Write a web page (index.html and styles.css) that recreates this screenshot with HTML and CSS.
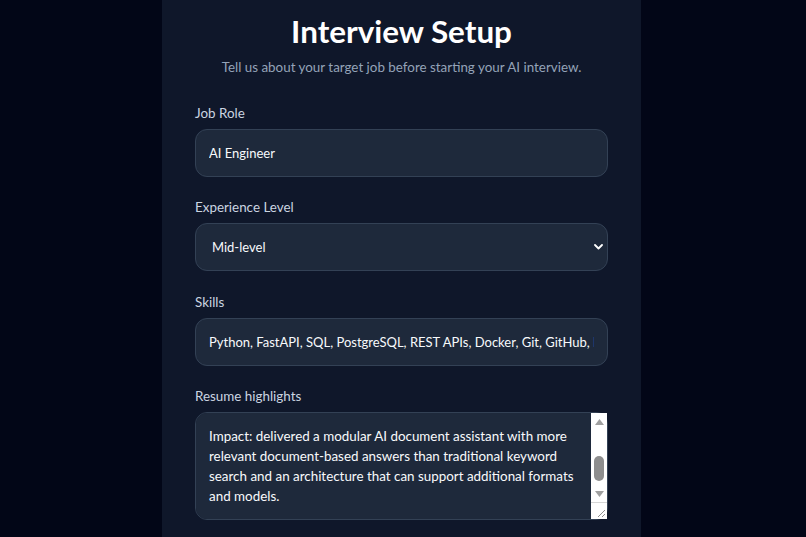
FILE: index.html
```html
<!DOCTYPE html>
<html lang="en">
<head>
<meta charset="utf-8">
<title>Interview Setup</title>
<link rel="stylesheet" href="styles.css">
</head>
<body>
<main class="setup">
  <h1 class="title">Interview Setup</h1>
  <p class="subtitle">Tell us about your target job before starting your AI interview.</p>
  <form class="form">
    <div class="field">
      <label class="label" for="role">Job Role</label>
      <input class="control" id="role" type="text" value="AI Engineer">
    </div>
    <div class="field">
      <label class="label" for="level">Experience Level</label>
      <div class="select-wrap">
        <select class="control select" id="level">
          <option>Entry-level</option>
          <option selected>Mid-level</option>
          <option>Senior</option>
        </select>
        <svg class="chevron" width="9" height="6" viewBox="0 0 9 6" aria-hidden="true"><polyline points="1,1 4.5,4.5 8,1" fill="none" stroke="#ffffff" stroke-width="1.8" stroke-linecap="round" stroke-linejoin="round"/></svg>
      </div>
    </div>
    <div class="field">
      <label class="label" for="skills">Skills</label>
      <input class="control" id="skills" type="text" value="Python, FastAPI, SQL, PostgreSQL, REST APIs, Docker, Git, GitHub, LangChain, OpenAI API">
    </div>
    <div class="field">
      <label class="label" for="resume">Resume highlights</label>
      <div class="textarea-wrap">
        <textarea class="control textarea" id="resume">Project: AI Document Assistant
Built a retrieval-augmented question answering assistant in Python and FastAPI that lets users upload PDFs and ask questions about them.
Implemented chunking, embeddings and vector search with PostgreSQL and exposed REST APIs for ingestion and chat.

Impact: delivered a modular AI document assistant with more relevant document-based answers than traditional keyword search and an architecture that can support additional formats and models.</textarea>
        <div class="scrollbar" aria-hidden="true">
          <div class="sb-button"><svg width="9" height="6" viewBox="0 0 9 6"><polygon points="0,6 4.5,0 9,6" fill="#a0a0a0"/></svg></div>
          <div class="sb-track"><div class="sb-thumb"></div></div>
          <div class="sb-button"><svg width="9" height="6" viewBox="0 0 9 6"><polygon points="0,0 9,0 4.5,6" fill="#a0a0a0"/></svg></div>
          <div class="sb-corner"><svg width="16" height="16" viewBox="0 0 16 16"><line x1="14" y1="7" x2="7" y2="14" stroke="#8f8f8f" stroke-width="1"/><line x1="14" y1="11" x2="11" y2="14" stroke="#8f8f8f" stroke-width="1"/></svg></div>
        </div>
      </div>
    </div>
  </form>
</main>
<script src="script.js"></script>
</body>
</html>
```
FILE: styles.css
```css
html, body {
  margin: 0;
  height: 100%;
}
body {
  box-sizing: border-box;
  padding-right: 3px;
  background: #020617;
  font-family: "Lato", "Noto Sans", sans-serif;
  color: #f8fafc;
  overflow: hidden;
}
.setup {
  box-sizing: border-box;
  width: 479px;
  min-height: 100vh;
  margin: 0 auto;
  padding: 13px 33px 12px;
  background: #0f172a;
}
.title {
  margin: 0;
  text-align: center;
  font-size: 31.4px;
  line-height: 36px;
  font-weight: 700;
  color: #ffffff;
}
.subtitle {
  margin: 8px 0 0;
  text-align: center;
  font-size: 13.4px;
  line-height: 20px;
  color: #94a3b8;
}
.form {
  margin-top: 26px;
  display: flex;
  flex-direction: column;
  gap: 20.4px;
}
.field {
  display: flex;
  flex-direction: column;
  gap: 6px;
}
.label {
  font-size: 13.4px;
  line-height: 20px;
  color: #cbd5e1;
}
.control {
  box-sizing: border-box;
  width: 100%;
  height: 48px;
  margin: 0;
  padding: 0 13px;
  background: #1e293b;
  border: 1px solid #334155;
  border-radius: 12px;
  color: #f8fafc;
  font-family: inherit;
  font-size: 13px;
  outline: none;
}
.select-wrap,
.textarea-wrap {
  position: relative;
}
.select {
  appearance: none;
  -webkit-appearance: none;
  padding-left: 16px;
  padding-right: 30px;
}
.chevron {
  position: absolute;
  right: 5px;
  top: 21px;
  pointer-events: none;
}
.textarea {
  display: block;
  height: 108px;
  padding: 13px 29px 13px 13px;
  font-size: 13.4px;
  line-height: 20px;
  resize: none;
  overflow-y: scroll;
}
.scrollbar {
  position: absolute;
  top: 1px;
  right: 1px;
  bottom: 1px;
  width: 16px;
  display: flex;
  flex-direction: column;
  background: #ffffff;
}
.sb-button {
  height: 17px;
  display: flex;
  align-items: center;
  justify-content: center;
}
.sb-track {
  flex: 1;
  display: flex;
  flex-direction: column;
  justify-content: flex-end;
  align-items: center;
  padding-bottom: 4px;
}
.sb-thumb {
  width: 10px;
  height: 25px;
  border-radius: 5px;
  background: #8e8e8e;
}
.sb-corner {
  height: 16px;
  border-top: 1px solid #d6d6d6;
  display: flex;
}
```
FILE: script.js
```js
var ta = document.getElementById('resume');
ta.scrollTop = ta.scrollHeight;
```
